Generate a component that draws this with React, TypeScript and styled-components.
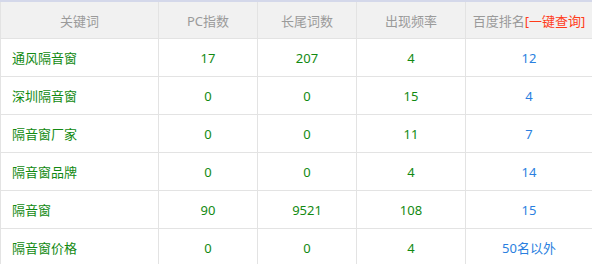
import React from "react";
import styled, { createGlobalStyle } from "styled-components";

const GlobalStyle = createGlobalStyle`
  html, body { margin: 0; padding: 0; background: #ffffff; }
  body { font-family: "Noto Sans", "Noto Sans CJK SC", sans-serif; font-size: 13px; }
`;

const Table = styled.div`
  display: grid;
  grid-template-columns: 158px 99px 99px 109px 127px;
  width: 592px;
  border-top: 2px solid #d4d8ea;
`;

const HeadCell = styled.div`
  height: 36px;
  display: flex;
  align-items: center;
  justify-content: center;
  background: #f1f1f1;
  color: #9a9a9a;
  border-left: 1px solid #e3e3e3;
  border-bottom: 1px solid #e3e3e3;
  white-space: nowrap;
`;

const Query = styled.span`
  color: #ff3c1a;
`;

const Cell = styled.div<{ $left?: boolean; $tone?: "green" | "blue" }>`
  height: 37px;
  display: flex;
  align-items: center;
  justify-content: ${(p) => (p.$left ? "flex-start" : "center")};
  padding-left: ${(p) => (p.$left ? "11px" : "0")};
  color: ${(p) => (p.$tone === "blue" ? "#2a7fe0" : "#128a12")};
  border-left: 1px solid #e3e3e3;
  border-bottom: 1px solid #e3e3e3;
  white-space: nowrap;
`;

const rows = [
  ["通风隔音窗", "17", "207", "4", "12"],
  ["深圳隔音窗", "0", "0", "15", "4"],
  ["隔音窗厂家", "0", "0", "11", "7"],
  ["隔音窗品牌", "0", "0", "4", "14"],
  ["隔音窗", "90", "9521", "108", "15"],
  ["隔音窗价格", "0", "0", "4", "50名以外"],
];

export default function App() {
  return (
    <>
      <GlobalStyle />
      <Table>
        <HeadCell>关键词</HeadCell>
        <HeadCell>PC指数</HeadCell>
        <HeadCell>长尾词数</HeadCell>
        <HeadCell>出现频率</HeadCell>
        <HeadCell>
          百度排名<Query>[一键查询]</Query>
        </HeadCell>
        {rows.map((r) => (
          <React.Fragment key={r[0]}>
            <Cell $left>{r[0]}</Cell>
            <Cell>{r[1]}</Cell>
            <Cell>{r[2]}</Cell>
            <Cell>{r[3]}</Cell>
            <Cell $tone="blue">{r[4]}</Cell>
          </React.Fragment>
        ))}
      </Table>
    </>
  );
}
